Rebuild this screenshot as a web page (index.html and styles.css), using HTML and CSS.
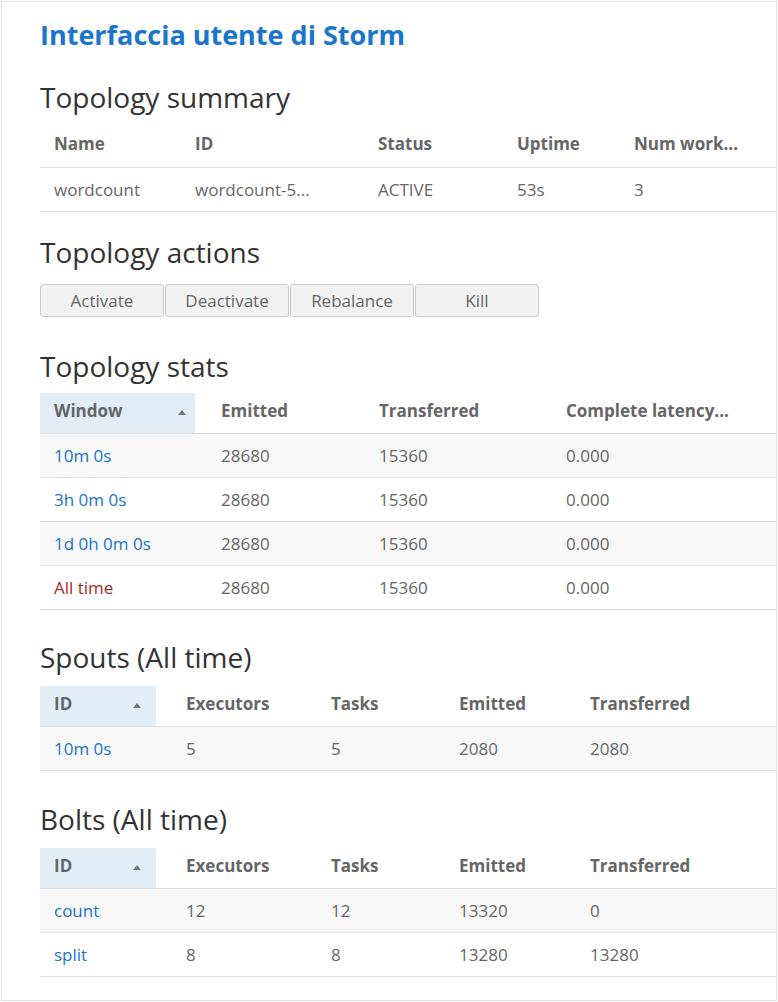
FILE: index.html
```html
<!DOCTYPE html>
<html lang="it">
<head>
<meta charset="utf-8">
<title>Interfaccia utente di Storm</title>
<link rel="stylesheet" href="styles.css">
</head>
<body>
<div class="frame">
  <h1 class="title">Interfaccia utente di Storm</h1>

  <section class="section section-summary">
    <h2 class="section-title">Topology summary</h2>
    <table class="grid">
      <colgroup>
        <col class="w141"><col class="w183"><col class="w139"><col class="w117"><col>
      </colgroup>
      <thead>
        <tr><th>Name</th><th>ID</th><th>Status</th><th>Uptime</th><th>Num work...</th></tr>
      </thead>
      <tbody>
        <tr><td>wordcount</td><td>wordcount-5...</td><td>ACTIVE</td><td>53s</td><td>3</td></tr>
      </tbody>
    </table>
  </section>

  <section class="section section-actions">
    <h2 class="section-title">Topology actions</h2>
    <div class="actions">
      <button class="btn" type="button">Activate</button>
      <button class="btn" type="button">Deactivate</button>
      <button class="btn" type="button">Rebalance</button>
      <button class="btn" type="button">Kill</button>
    </div>
  </section>

  <section class="section section-stats">
    <h2 class="section-title">Topology stats</h2>
    <table class="grid striped">
      <colgroup>
        <col class="w167"><col class="w158"><col class="w187"><col>
      </colgroup>
      <thead>
        <tr>
          <th class="sorted sorted-wide"><div class="sort-label sort-label-wide"><span>Window</span><span class="arrow"></span></div></th>
          <th>Emitted</th><th>Transferred</th><th>Complete latency...</th>
        </tr>
      </thead>
      <tbody>
        <tr><td><a class="link" href="#">10m 0s</a></td><td>28680</td><td>15360</td><td>0.000</td></tr>
        <tr><td><a class="link" href="#">3h 0m 0s</a></td><td>28680</td><td>15360</td><td>0.000</td></tr>
        <tr><td><a class="link" href="#">1d 0h 0m 0s</a></td><td>28680</td><td>15360</td><td>0.000</td></tr>
        <tr><td><a class="link link-current" href="#">All time</a></td><td>28680</td><td>15360</td><td>0.000</td></tr>
      </tbody>
    </table>
  </section>

  <section class="section section-spouts">
    <h2 class="section-title">Spouts (All time)</h2>
    <table class="grid striped">
      <colgroup>
        <col class="w132"><col class="w145"><col class="w128"><col class="w131"><col>
      </colgroup>
      <thead>
        <tr>
          <th class="sorted sorted-narrow"><div class="sort-label sort-label-narrow"><span>ID</span><span class="arrow"></span></div></th>
          <th>Executors</th><th>Tasks</th><th>Emitted</th><th>Transferred</th>
        </tr>
      </thead>
      <tbody>
        <tr><td><a class="link" href="#">10m 0s</a></td><td>5</td><td>5</td><td>2080</td><td>2080</td></tr>
      </tbody>
    </table>
  </section>

  <section class="section section-bolts">
    <h2 class="section-title">Bolts (All time)</h2>
    <table class="grid striped">
      <colgroup>
        <col class="w132"><col class="w145"><col class="w128"><col class="w131"><col>
      </colgroup>
      <thead>
        <tr>
          <th class="sorted sorted-narrow"><div class="sort-label sort-label-narrow"><span>ID</span><span class="arrow"></span></div></th>
          <th>Executors</th><th>Tasks</th><th>Emitted</th><th>Transferred</th>
        </tr>
      </thead>
      <tbody>
        <tr><td><a class="link" href="#">count</a></td><td>12</td><td>12</td><td>13320</td><td>0</td></tr>
        <tr><td><a class="link" href="#">split</a></td><td>8</td><td>8</td><td>13280</td><td>13280</td></tr>
      </tbody>
    </table>
  </section>
</div>
</body>
</html>
```

FILE: styles.css
```css
* {
  box-sizing: border-box;
}

body {
  margin: 0;
  font-family: "Open Sans", "Noto Sans", sans-serif;
  font-size: 17px;
  color: #666;
  background: #fff;
}

.frame {
  margin: 1px;
  width: 776px;
  height: 1000px;
  border: 1px solid #e3e3e3;
  overflow: hidden;
  padding: 15px 0 0 38px;
}

.title {
  margin: 0;
  font-size: 27px;
  line-height: 36px;
  font-weight: 700;
  color: #1a75cc;
}

.section-title {
  margin: 0 0 14px;
  font-size: 28px;
  line-height: 34px;
  font-weight: 400;
  color: #333;
}

.section-summary { margin-top: 27px; }
.section-summary .section-title { margin-bottom: 10px; }
.section-summary .grid th { height: 44px; }
.section-actions { margin-top: 23px; }
.section-actions .section-title { margin-bottom: 15px; }
.section-stats { margin-top: 32px; }
.section-stats .section-title { margin-bottom: 10px; }
.section-spouts { margin-top: 30px; }
.section-spouts .section-title { margin-bottom: 12px; }
.section-bolts { margin-top: 31px; }
.section-bolts .section-title { margin-bottom: 12px; }

.grid {
  width: 100%;
  table-layout: fixed;
  border-collapse: separate;
  border-spacing: 0;
}

.w117 { width: 117px; }
.w128 { width: 128px; }
.w131 { width: 131px; }
.w132 { width: 132px; }
.w139 { width: 139px; }
.w141 { width: 141px; }
.w145 { width: 145px; }
.w158 { width: 158px; }
.w167 { width: 167px; }
.w183 { width: 183px; }
.w187 { width: 187px; }

.grid th,
.grid td {
  padding: 0 14px;
  text-align: left;
  vertical-align: middle;
  white-space: nowrap;
  overflow: hidden;
  border-bottom: 1px solid #dedede;
}

.grid th {
  height: 41px;
  padding-bottom: 5px;
  font-weight: 700;
  color: #666;
}

.grid td {
  height: 44px;
  font-weight: 400;
  color: #666;
}

.striped tbody tr:nth-child(odd) td {
  background: #f8f8f8;
}

.sorted-wide {
  background: linear-gradient(90deg, #e1eef7 0 155px, transparent 155px);
}

.sorted-narrow {
  background: linear-gradient(90deg, #e1eef7 0 116px, transparent 116px);
}

.sort-label {
  display: flex;
  align-items: center;
  justify-content: space-between;
}

.sort-label-wide { width: 132px; }
.sort-label-narrow { width: 87px; }

.arrow {
  width: 0;
  height: 0;
  border-left: 4.5px solid transparent;
  border-right: 4.5px solid transparent;
  border-bottom: 5px solid #777;
  margin-top: 4px;
}

.link {
  color: #1a73cc;
  text-decoration: none;
}

.link-current {
  color: #a52a2a;
}

.actions {
  display: flex;
  gap: 1px;
}

.btn {
  width: 124px;
  height: 33px;
  padding: 0;
  font-family: inherit;
  font-size: 17px;
  color: #666;
  background: #f2f2f2;
  border: 1px solid #cdcdcd;
  border-radius: 3px;
}
```
